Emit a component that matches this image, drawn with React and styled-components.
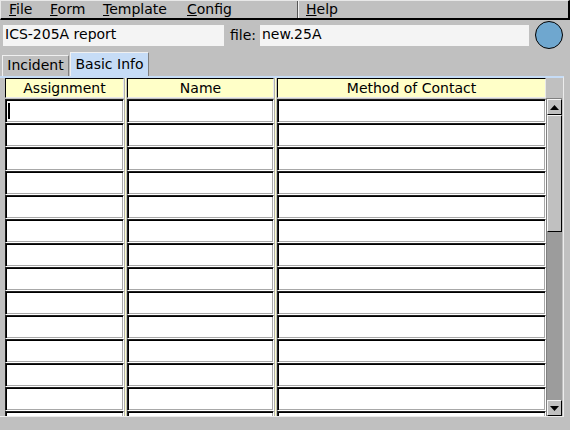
import styled, { createGlobalStyle } from "styled-components";

const GlobalStyle = createGlobalStyle`
  html, body {
    margin: 0;
    padding: 0;
    background: #c0c0c0;
  }
  body {
    font-family: "DejaVu Sans", "Liberation Sans", sans-serif;
    font-size: 14px;
    color: #000;
  }
`;

const menus = [
  { label: "File", width: 41 },
  { label: "Form", width: 53 },
  { label: "Template", width: 84 },
  { label: "Config", width: 110 },
];
const columns = [
  { title: "Assignment", width: 119 },
  { title: "Name", width: 147 },
  { title: "Method of Contact", width: 269 },
];
const ROWS = 14;

const App = () => {
  return (
    <Window>
      <GlobalStyle />
      <MenuBar>
        {menus.map((m) => (
          <MenuItem key={m.label} $width={m.width}>
            <u>{m.label[0]}</u>
            {m.label.slice(1)}
          </MenuItem>
        ))}
        <MenuSep />
        <MenuItem>
          <u>H</u>elp
        </MenuItem>
      </MenuBar>

      <InfoRow>
        <Entry $width={221}>ICS-205A report</Entry>
        <Label>file:</Label>
        <Entry $width={269}>new.25A</Entry>
        <Light />
      </InfoRow>

      <TabBar>
        <Tab $width={67}>Incident</Tab>
        <Tab $width={79} $active>
          Basic Info
        </Tab>
      </TabBar>

      <Pane>
        {columns.map((col, ci) => (
          <Group key={col.title}>
            {ci > 0 && <ColSep />}
            <Column $width={col.width}>
              <HeaderCell>{col.title}</HeaderCell>
              <Body>
                {Array.from({ length: ROWS }).map((_, ri) => (
                  <Cell key={ri}>{ci === 0 && ri === 0 && <Caret />}</Cell>
                ))}
              </Body>
            </Column>
          </Group>
        ))}
        <ScrollColumn>
          <Scrollbar>
            <ArrowButton>
              <svg width="9" height="5" viewBox="0 0 9 5">
                <path d="M0 5 L4.5 0 L9 5 Z" fill="#000" />
              </svg>
            </ArrowButton>
            <Thumb />
            <Trough />
            <ArrowButton>
              <svg width="9" height="5" viewBox="0 0 9 5">
                <path d="M0 0 L9 0 L4.5 5 Z" fill="#000" />
              </svg>
            </ArrowButton>
          </Scrollbar>
        </ScrollColumn>
      </Pane>
    </Window>
  );
};

const Window = styled.div`
  width: 570px;
  height: 430px;
  overflow: hidden;
  background: #c0c0c0;
`;

const MenuBar = styled.div`
  box-sizing: border-box;
  height: 20px;
  width: 570px;
  display: flex;
  align-items: center;
  border-top: 1px solid #e8e8e8;
  border-left: 1px solid #e8e8e8;
  border-bottom: 2px solid #000;
  border-right: 2px solid #000;
  padding-left: 8px;
`;

const MenuItem = styled.span`
  flex: none;
  width: ${(p) => (p.$width ? `${p.$width}px` : "auto")};
  line-height: 17px;
  white-space: nowrap;
`;

const MenuSep = styled.div`
  width: 1px;
  height: 17px;
  background: #555;
  border-right: 1px solid #f0f0f0;
  margin-right: 7px;
`;

const InfoRow = styled.div`
  height: 30px;
  display: flex;
  align-items: center;
  padding-left: 3px;
`;

const Entry = styled.div`
  box-sizing: border-box;
  width: ${(p) => p.$width}px;
  height: 21px;
  background: #f4f4f4;
  padding: 0 2px;
  line-height: 19px;
  white-space: nowrap;
`;

const Label = styled.span`
  margin: 0 3px 0 6px;
  width: 27px;
  line-height: 19px;
`;

const Light = styled.div`
  box-sizing: border-box;
  width: 28px;
  height: 28px;
  margin-left: 6px;
  border-radius: 50%;
  background: #6fa7cf;
  border: 1px solid #000;
`;

const TabBar = styled.div`
  height: 26px;
  display: flex;
  align-items: flex-end;
  padding-left: 2px;
  gap: 1px;
`;

const Tab = styled.div`
  box-sizing: border-box;
  width: ${(p) => p.$width}px;
  height: ${(p) => (p.$active ? 24 : 21)}px;
  line-height: ${(p) => (p.$active ? 22 : 19)}px;
  text-align: center;
  white-space: nowrap;
  background: ${(p) => (p.$active ? "#c6dcf6" : "#c0c0c0")};
  border-top: 1px solid #f0f0f0;
  border-left: 1px solid #f0f0f0;
  border-right: 1px solid #808080;
`;

const Pane = styled.div`
  box-sizing: border-box;
  width: 564px;
  height: 341px;
  display: flex;
  padding-left: 5px;
  border-top: 2px solid #c6dcf6;
  border-right: 1px solid #ececec;
  border-bottom: 1px solid #ececec;
`;

const Group = styled.div`
  display: flex;
`;

const ColSep = styled.div`
  width: 3px;
  background: linear-gradient(
    to right,
    #b0b0b0 0 1px,
    #ffffc8 1px 2px,
    #c0c0c0 2px 3px
  );
`;

const Column = styled.div`
  width: ${(p) => p.$width}px;
  display: flex;
  flex-direction: column;
`;

const HeaderCell = styled.div`
  box-sizing: border-box;
  height: 20px;
  background: #ffffc8;
  border: 1px solid;
  border-color: #000 #e8e8e8 #e8e8e8 #000;
  text-align: center;
  line-height: 19px;
  white-space: nowrap;
`;

const Body = styled.div`
  height: 318px;
  overflow: hidden;
  padding-top: 1px;
  box-sizing: border-box;
`;

const Cell = styled.div`
  box-sizing: border-box;
  height: 24px;
  background: #fff;
  border: 1px solid;
  border-color: #202020 #fff #fff #202020;
  box-shadow: inset 1px 1px 0 #000, inset -1px -1px 0 #a8a8a8;
  display: flex;
  align-items: center;
`;

const Caret = styled.span`
  width: 2px;
  height: 16px;
  margin-left: 2px;
  background: #000;
`;

const ScrollColumn = styled.div`
  padding-top: 20px;
  width: 16px;
`;

const Scrollbar = styled.div`
  box-sizing: border-box;
  height: 318px;
  width: 16px;
  display: flex;
  flex-direction: column;
  background: #9c9c9c;
  border-top: 1px solid #808080;
  border-left: 1px solid #808080;
`;

const ArrowButton = styled.div`
  box-sizing: border-box;
  height: 16px;
  flex: none;
  display: flex;
  align-items: center;
  justify-content: center;
  background: #c0c0c0;
  border: 1px solid;
  border-color: #f4f4f4 #000 #000 #f4f4f4;
`;

const Thumb = styled.div`
  box-sizing: border-box;
  height: 117px;
  flex: none;
  background: #c0c0c0;
  border: 1px solid;
  border-color: #f4f4f4 #000 #000 #f4f4f4;
`;

const Trough = styled.div`
  flex: 1;
`;

export default App;
